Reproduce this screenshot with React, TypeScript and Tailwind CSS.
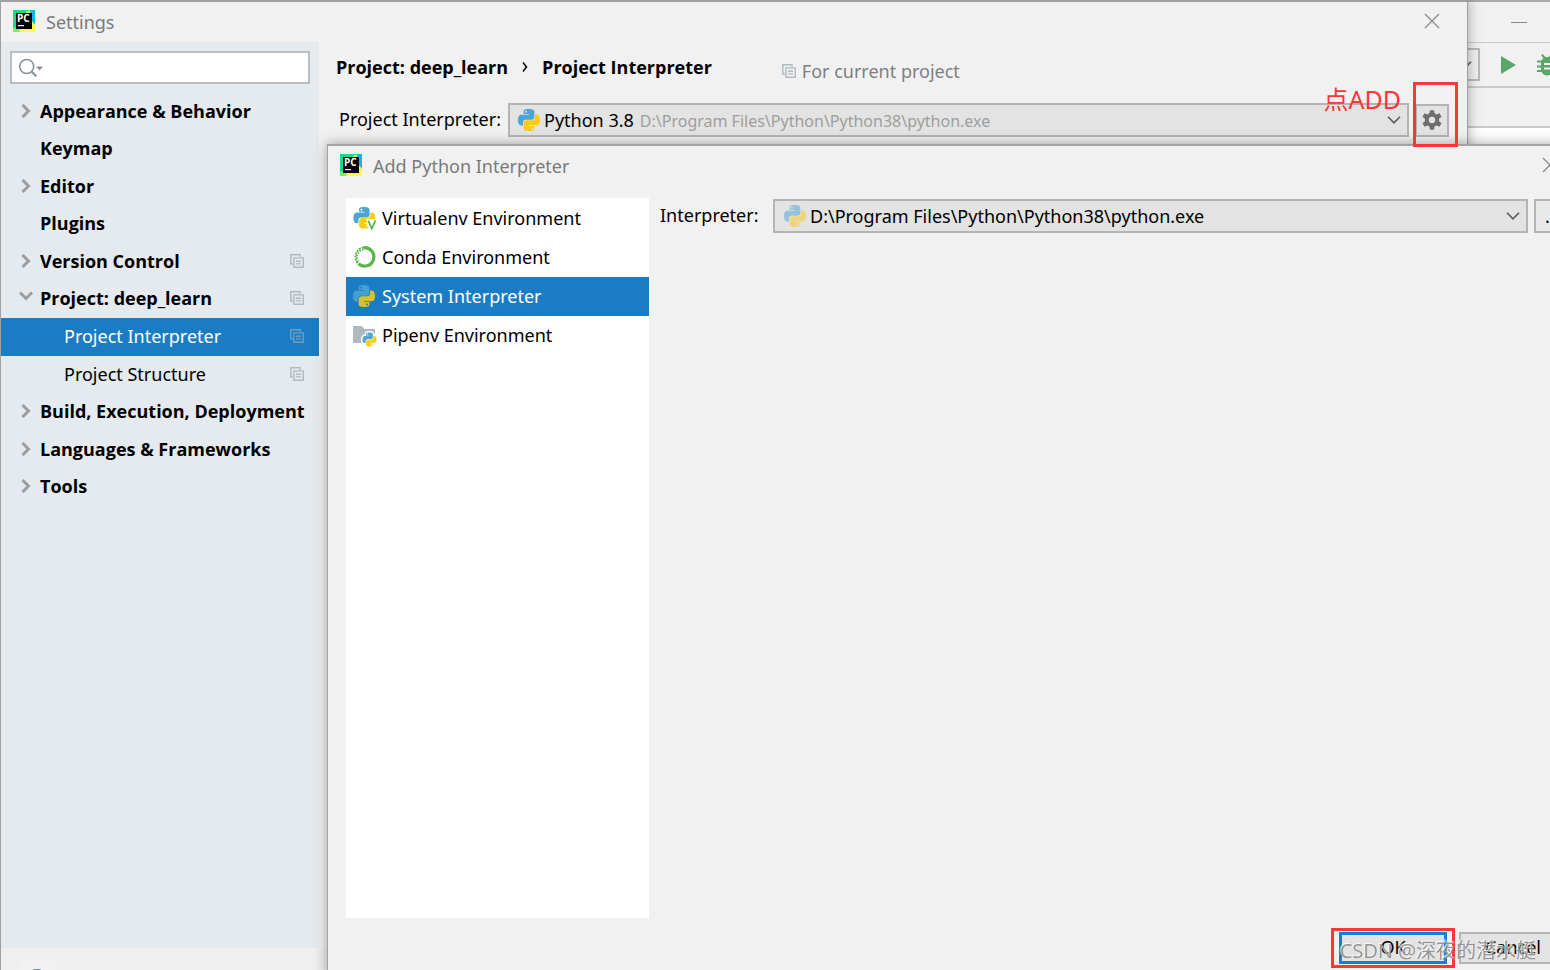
import React from "react";

const BLUE_SNAKE =
  "M14.25.18l.9.2.73.26.59.3.45.32.34.34.25.34.16.33.1.3.04.26.02.2-.01.13V8.5l-.05.63-.13.55-.21.46-.26.38-.3.31-.33.25-.35.19-.35.14-.33.1-.3.07-.26.04-.21.02H8.77l-.69.05-.59.14-.5.22-.41.27-.33.32-.27.35-.2.36-.15.37-.1.35-.07.32-.04.27-.02.21v3.06H3.17l-.21-.03-.28-.07-.32-.12-.35-.18-.36-.26-.36-.36-.35-.46-.32-.59-.28-.73-.21-.88-.14-1.05-.05-1.23.06-1.22.16-1.04.24-.87.32-.71.36-.57.4-.44.42-.33.42-.24.4-.16.36-.1.32-.05.24-.01h.16l.06.01h8.16v-.83H6.18l-.01-2.75-.02-.37.05-.34.11-.31.17-.28.25-.26.31-.23.38-.2.44-.18.51-.15.58-.12.64-.1.71-.06.77-.04.84-.02 1.27.05zM7.95 2.16l-.23.33-.08.41.08.41.23.34.33.22.41.09.41-.09.33-.22.23-.34.08-.41-.08-.41-.23-.33-.33-.22-.41-.09-.41.09z";
const YELLOW_SNAKE =
  "M21.04 6.11l.28.06.32.12.35.18.36.27.36.35.35.47.32.59.28.73.21.88.14 1.04.05 1.23-.06 1.23-.16 1.04-.24.86-.32.71-.36.57-.4.45-.42.33-.42.24-.4.16-.36.09-.32.05-.24.02-.16-.01h-8.22v.82h5.84l.01 2.76.02.36-.05.34-.11.31-.17.29-.25.25-.31.24-.38.2-.44.17-.51.15-.58.13-.64.09-.71.07-.77.04-.84.01-1.27-.04-1.07-.14-.9-.2-.73-.25-.59-.3-.45-.33-.34-.34-.25-.34-.16-.33-.1-.3-.04-.25-.02-.2.01-.13v-5.34l.05-.64.13-.54.21-.46.26-.38.3-.32.33-.24.35-.2.35-.14.33-.1.3-.06.26-.04.21-.02.13-.01h5.84l.69-.05.59-.14.5-.21.41-.28.33-.32.27-.35.2-.36.15-.36.1-.35.07-.32.04-.28.02-.21V6.07h2.09l.14.01zM14.57 20.36l-.23.33-.08.41.08.41.23.33.33.23.41.08.41-.08.33-.23.23-.33.08-.41-.08-.41-.23-.33-.33-.23-.41-.08-.41.08z";

function Snakes() {
  return (
    <>
      <path fillRule="evenodd" d={BLUE_SNAKE} fill="#4ea5d3" />
      <path fillRule="evenodd" d={YELLOW_SNAKE} fill="#fccb1a" />
    </>
  );
}

function PythonIcon({ className = "" }: { className?: string }) {
  return (
    <svg viewBox="0 0 24 24" className={`size-[22px] shrink-0 ${className}`} aria-hidden="true">
      <Snakes />
    </svg>
  );
}

function VirtualenvIcon() {
  return (
    <svg viewBox="0 0 24 24" className="size-6 shrink-0" aria-hidden="true">
      <g transform="translate(.5 1) scale(.9)">
        <Snakes />
      </g>
      <path d="M13 13h11v11h-8z" fill="#fff" />
      <path d="M15.2 14.500l3.600 8 3.600-8" fill="none" stroke="#59b548" strokeWidth="1.8" />
    </svg>
  );
}

function CondaIcon() {
  return (
    <svg viewBox="0 0 24 24" className="size-6 shrink-0" fill="none" stroke="#59b548" aria-hidden="true">
      <path d="M10.500 2.800A9.200 9.200 0 1 1 5.500 18.800" strokeWidth="3.200" />
      <path d="M10.500 2.300A10 10 0 0 0 5.200 19" strokeWidth="1.8" strokeDasharray="2 1" />
      <path d="M10.500 4.500A7.800 7.800 0 0 0 5.500 17" strokeWidth="1.7" strokeDasharray="1.6 1.2" />
    </svg>
  );
}

function PipenvIcon() {
  return (
    <svg viewBox="0 0 24 24" className="size-6 shrink-0" aria-hidden="true">
      <path d="M0 3h8.5l3 3H22v14H0z" fill="#aeb9c0" />
      <g transform="translate(9.5 9.5) scale(.58)">
        <g stroke="#fff" strokeWidth="5" strokeLinejoin="round">
          <path d={BLUE_SNAKE} fill="#fff" />
          <path d={YELLOW_SNAKE} fill="#fff" />
        </g>
        <Snakes />
      </g>
    </svg>
  );
}

function PyCharmIcon() {
  return (
    <svg viewBox="0 0 22 22" className="size-[22px] shrink-0" aria-hidden="true">
      <path d="M0 0h22v22H0z" fill="#21d789" />
      <path d="M11 4l5-4 3 5z" fill="#d8f03a" />
      <path d="M17 0h5v14l-3-2z" fill="#12b5ee" />
      <path d="M4 22l2-4h12l1-7 3 4v7z" fill="#fcf84a" />
      <path d="M0 22v-4l5-1 2 5z" fill="#7fea62" />
      <path d="M3 3h16v16H3z" fill="#000" />
      <text x="4" y="12" fontSize="10" fontWeight="700" fill="#fff" fontFamily="Open Sans, sans-serif">
        PC
      </text>
      <path d="M5 15h6v1.2H5z" fill="#fff" />
    </svg>
  );
}

function CopyIcon({ className = "text-[#aeb9c0]" }: { className?: string }) {
  return (
    <svg viewBox="0 0 14 14" className={`size-[14px] shrink-0 ${className}`} fill="none" stroke="currentColor" strokeWidth="1.4" aria-hidden="true">
      <path d="M2.8 10H.8V.8H10v2" />
      <path d="M3.9 3.9h9.3v9.3H3.9z" />
      <path d="M6 7.2h5M6 9.9h5" />
    </svg>
  );
}

function Chevron() {
  return (
    <svg viewBox="0 0 14 8" className="pointer-events-none h-2 w-[14px] shrink-0" fill="none" stroke="#5a5a5a" strokeWidth="1.6" aria-hidden="true">
      <path d="M1 .8l6 6 6-6" />
    </svg>
  );
}

function TreeArrow({ open }: { open: boolean }) {
  return open ? (
    <svg viewBox="0 0 14 10" className="-mt-1 h-[10px] w-[14px]" fill="none" stroke="#9b9ea0" strokeWidth="3" aria-hidden="true">
      <path d="M1 1.5l6 6 6-6" />
    </svg>
  ) : (
    <svg viewBox="0 0 10 14" className="h-[14px] w-[10px]" fill="none" stroke="#9b9ea0" strokeWidth="3" aria-hidden="true">
      <path d="M1.5 1l6 6-6 6" />
    </svg>
  );
}

function GearIcon() {
  return (
    <svg viewBox="-10 -10 20 20" className="size-5" fill="#6e6e6e" aria-hidden="true">
      <circle r="5.200" fill="none" stroke="#6e6e6e" strokeWidth="4" />
      {[0, 60, 120].map((a) => (
        <React.Fragment key={a}>
          <path d="M-2.6 -6l.6-3.800h4l.6 3.800z" transform={`rotate(${a})`} />
          <path d="M-2.6 6l.6 3.800h4l.6-3.800z" transform={`rotate(${a})`} />
        </React.Fragment>
      ))}
    </svg>
  );
}

function CloseButton({ label }: { label: string }) {
  return (
    <button type="button" aria-label={label} className="flex size-6 items-center justify-center">
      <svg viewBox="0 0 16 16" className="size-4" fill="none" stroke="#8c8c8c" strokeWidth="1.4" aria-hidden="true">
        <path d="M1 1l14 14M15 1L1 15" />
      </svg>
    </button>
  );
}

type Item = { label: string; open?: boolean; arrow?: boolean; copy?: boolean; child?: boolean; selected?: boolean };

const tree: Item[] = [
  { label: "Appearance & Behavior", arrow: true },
  { label: "Keymap" },
  { label: "Editor", arrow: true },
  { label: "Plugins" },
  { label: "Version Control", arrow: true, copy: true },
  { label: "Project: deep_learn", arrow: true, open: true, copy: true },
  { label: "Project Interpreter", child: true, copy: true, selected: true },
  { label: "Project Structure", child: true, copy: true },
  { label: "Build, Execution, Deployment", arrow: true },
  { label: "Languages & Frameworks", arrow: true },
  { label: "Tools", arrow: true },
];

const environments = [
  { label: "Virtualenv Environment", icon: <VirtualenvIcon /> },
  { label: "Conda Environment", icon: <CondaIcon /> },
  { label: "System Interpreter", icon: <PythonIcon className="mr-[2px] opacity-85" />, selected: true },
  { label: "Pipenv Environment", icon: <PipenvIcon /> },
];

function IdeWindow() {
  return (
    <div className="absolute inset-0 flex flex-col border-t-2 border-[#a9a9a9] bg-white">
      <div className="flex h-[41px] items-center justify-end border-b border-[#c9c9c9] bg-[#f1f1f1] pr-[23px]">
        <button type="button" aria-label="Minimize" className="flex h-5 w-4 items-center">
          <span className="h-px w-full bg-[#8c8c8c]" />
        </button>
      </div>
      <div className="flex h-[45px] items-center justify-end overflow-hidden border-b-2 border-[#c9c9c9] bg-[#f1f1f1]">
        <button type="button" aria-label="Run configuration" className="flex h-[33px] w-[120px] items-center justify-end border-2 border-[#b9b9b9] bg-[#f1f1f1] pr-[6px]">
          <Chevron />
        </button>
        <button type="button" aria-label="Run" className="ml-[21px]">
          <svg viewBox="0 0 15 18" className="h-[18px] w-[15px]" fill="#59a869" aria-hidden="true">
            <path d="M0 0l15 9-15 9z" />
          </svg>
        </button>
        <button type="button" aria-label="Debug" className="-mr-[7px] ml-[21px]">
          <svg viewBox="0 0 20 22" className="h-[22px] w-5" fill="#59a869" aria-hidden="true">
            <path d="M4 1.5L5.5 0l3 3h3l3-3L16 1.500l-2.400 2.400Q15 5 15.500 6.500H20v2h-4v3h4v2h-4v2.500h4v2h-4.600Q13.500 21.500 10 21.500T4.600 18H0v-2h4v-2.500H0v-2h4v-3H0v-2h4.500Q5 5 6.400 3.900z" />
            <path d="M7 9h6v2H7zM7 13.500h6v2H7z" fill="#f1f1f1" />
          </svg>
        </button>
      </div>
      <div className="h-10 border-b-2 border-[#c9c9c9] bg-[#f1f1f1]" />
    </div>
  );
}

function Sidebar() {
  return (
    <aside className="flex w-[318px] shrink-0 flex-col bg-[#e5eaee]">
      <label className="mx-[9px] mt-[9px] flex h-[33px] items-center border-2 border-[#bbbec1] bg-white pl-[7px]">
        <svg viewBox="0 0 24 20" className="h-5 w-6 shrink-0" fill="none" stroke="#87939a" strokeWidth="1.6" aria-hidden="true">
          <circle cx="7.700" cy="8.500" r="7" />
          <path d="M12.500 13.500l4.800 4.800" strokeWidth="2.200" />
          <path d="M17 8.500h7l-3.500 4z" fill="#87939a" stroke="none" />
        </svg>
        <input type="text" aria-label="Search settings" className="min-w-0 flex-1 bg-transparent px-1 outline-none" />
      </label>
      <ul className="mt-[9px] grid h-[413px] auto-rows-fr grid-cols-1">
        {tree.map((item) => (
          <li key={item.label} className="min-h-0">
            <button
              type="button"
              className={`flex h-full w-full items-center pr-[15px] pb-[2px] text-left whitespace-nowrap ${item.selected ? "bg-[#1a7dc4] text-white" : ""} ${item.child ? "pl-[63px]" : "pl-[18px] font-['Open_Sans',sans-serif] font-bold"}`}
            >
              {!item.child && (
                <span className="flex w-[21px] shrink-0 items-center">
                  {item.arrow && (
                    <span className="flex w-[14px] justify-center">
                      <TreeArrow open={!!item.open} />
                    </span>
                  )}
                </span>
              )}
              <span className="min-w-0 flex-1">{item.label}</span>
              {item.copy && <CopyIcon className={item.selected ? "text-[#6d9fc2]" : "text-[#aeb9c0]"} />}
            </button>
          </li>
        ))}
      </ul>
    </aside>
  );
}

function SettingsWindow() {
  return (
    <section className="absolute top-0 right-[82px] -bottom-8 left-0 flex flex-col border-t-2 border-r border-l border-[#a0a0a0] bg-[#f1f1f1] shadow-[0_0_12px_rgba(0,0,0,0.35)]">
      <header className="flex h-10 shrink-0 items-center pr-[23px] pb-[2px] pl-3">
        <PyCharmIcon />
        <h1 className="ml-[11px] flex-1 pt-[2px] text-[#7a7a7a]">Settings</h1>
        <CloseButton label="Close settings" />
      </header>
      <div className="flex min-h-0 flex-1">
        <Sidebar />
        <main className="flex-1 pr-[18px] pl-[17px]">
          <div className="flex h-[50px] items-center whitespace-nowrap">
            <h2 className="font-['Open_Sans',sans-serif] font-bold">Project: deep_learn</h2>
            <svg viewBox="0 0 6 12" className="mx-[14px] h-3 w-[6px]" fill="none" stroke="#000" strokeWidth="1.500" aria-hidden="true">
              <path d="M1 1.500l3.500 4.500L1 10.500" />
            </svg>
            <h2 className="font-['Open_Sans',sans-serif] font-bold">Project Interpreter</h2>
            <p className="mt-2 ml-[70px] flex items-center gap-[6px] text-[#7f7f7f]">
              <CopyIcon />
              For current project
            </p>
          </div>
          <div className="mt-[11px] flex items-center gap-[6px] pl-[3px]">
            <label htmlFor="project-interpreter" className="w-[163px] shrink-0 pb-[2px] whitespace-nowrap">
              Project Interpreter:
            </label>
            <div className="relative flex h-[34px] flex-1 items-center border-2 border-[#b4b4b4] bg-[#e3e3e3] pr-[6px] pl-2 whitespace-nowrap">
              <PythonIcon />
              <select id="project-interpreter" className="ml-1 appearance-none bg-transparent outline-none [field-sizing:content]">
                <option>Python 3.8</option>
              </select>
              <span className="ml-[6px] flex-1 pt-[2px] text-[16px] text-[#9e9e9e]">D:\Program Files\Python\Python38\python.exe</span>
              <Chevron />
              <span className="absolute right-[6px] bottom-6 text-[25px] leading-6 text-[#fb3737]">点ADD</span>
            </div>
            <button type="button" aria-label="Interpreter options" className="flex h-[33px] w-[34px] items-center justify-center border-2 border-[#b4b4b4] bg-[#e3e3e3]">
              <GearIcon />
            </button>
          </div>
        </main>
      </div>
      <footer className="flex h-[54px] shrink-0 bg-[#efefef] pt-[13px] pl-[18px]">
        <button type="button" aria-label="Help" className="flex h-9 w-9 justify-center bg-[#f2f2f2] pt-2">
          <span className="size-6 rounded-full border-2 border-[#3f7fb8] bg-white" />
        </button>
      </footer>
    </section>
  );
}

function AddInterpreterDialog() {
  return (
    <section className="absolute top-[144px] -right-[33px] -bottom-3 left-[327px] flex flex-col border-t-2 border-l border-[#a3a3a3] bg-[#f1f1f1] shadow-[0_0_12px_rgba(0,0,0,0.35)]">
      <header className="flex h-10 shrink-0 items-center pr-[21px] pb-[2px] pl-3">
        <PyCharmIcon />
        <h2 className="ml-[11px] flex-1 pt-[2px] text-[#7a7a7a]">Add Python Interpreter</h2>
        <CloseButton label="Close dialog" />
      </header>
      <div className="flex min-h-0 flex-1 pt-3 pr-4 pl-[18px]">
        <ul className="w-[303px] shrink-0 bg-white pt-px">
          {environments.map((env) => (
            <li key={env.label}>
              <button
                type="button"
                className={`flex h-[39px] w-full items-center gap-[5px] pb-[2px] pl-[7px] text-left whitespace-nowrap ${env.selected ? "bg-[#1a7dc4] text-white" : ""}`}
              >
                {env.icon}
                {env.label}
              </button>
            </li>
          ))}
        </ul>
        <div className="flex h-9 min-w-0 flex-1 items-center pl-[11px]">
          <label htmlFor="base-interpreter" className="w-[113px] shrink-0 pb-[2px]">
            Interpreter:
          </label>
          <div className="flex h-[34px] min-w-0 flex-1 items-center border-2 border-[#b4b4b4] bg-[#e3e3e3] pr-[6px] pl-[9px]">
            <PythonIcon className="opacity-50" />
            <select id="base-interpreter" className="ml-1 min-w-0 flex-1 appearance-none bg-transparent outline-none">
              <option>D:\Program Files\Python\Python38\python.exe</option>
            </select>
            <Chevron />
          </div>
          <button type="button" aria-label="Browse" className="ml-[6px] flex h-[34px] w-[33px] items-center border-2 border-[#b4b4b4] bg-[#e9e9e9] pl-[9px]">
            ...
          </button>
        </div>
      </div>
      <footer className="flex shrink-0 justify-end gap-3 pt-[14px] pr-4 pb-[18px]">
        <div className="relative">
          <button type="button" className="h-8 w-[108px] border-[3px] border-[#0f7fdb] bg-[#e3e3e3] pb-[2px]">
            OK
          </button>
          <span className="pointer-events-none absolute -inset-x-2 -inset-y-1 border-[3px] border-[#fb3737]" />
        </div>
        <button type="button" className="h-8 w-[108px] border-2 border-[#b4b4b4] bg-[#e3e3e3] pb-[2px]">
          Cancel
        </button>
      </footer>
    </section>
  );
}

export default function App() {
  return (
    <div className="relative h-screen overflow-hidden bg-[#f1f1f1] font-['Noto_Sans','Noto_Sans_CJK_SC',sans-serif] text-[18px] leading-6 text-black">
      <IdeWindow />
      <SettingsWindow />
      <AddInterpreterDialog />
      <span className="pointer-events-none absolute top-[82px] right-[92px] h-[65px] w-[45px] border-[3px] border-[#fb3737]" />
      <p className="pointer-events-none absolute right-[14px] bottom-[7px] font-['Open_Sans','Noto_Sans_CJK_SC',sans-serif] text-[20px] text-[#8a8a8a]/90 [text-shadow:-1px_-1px_0_rgba(255,255,255,0.8)]">
        CSDN @深夜的潜水艇
      </p>
    </div>
  );
}
